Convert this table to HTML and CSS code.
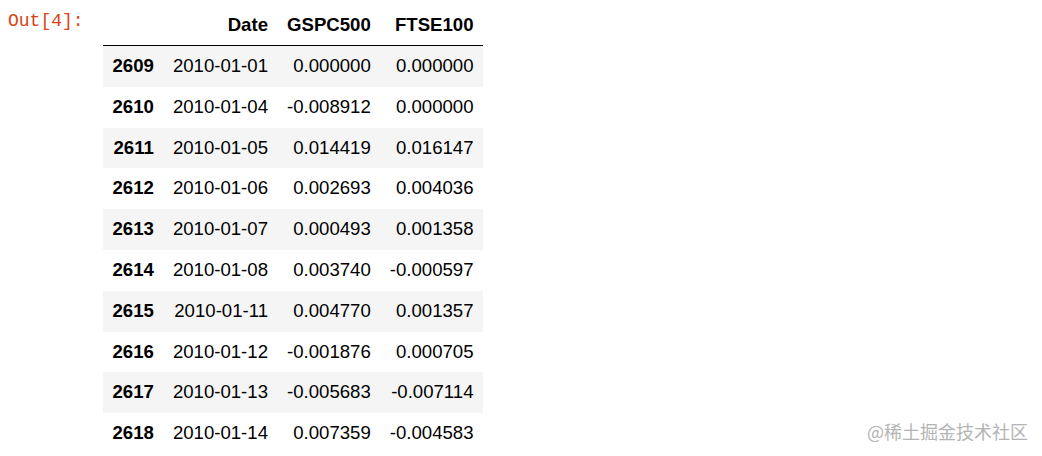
FILE: index.html
```html
<!DOCTYPE html>
<html>
<head>
<meta charset="utf-8">
<link rel="stylesheet" href="styles.css">
</head>
<body>
<div class="cell">
  <div class="prompt">Out[4]:</div>
  <table class="df">
    <thead>
      <tr><th></th><th>Date</th><th>GSPC500</th><th>FTSE100</th></tr>
    </thead>
    <tbody>
      <tr><th>2609</th><td>2010-01-01</td><td>0.000000</td><td>0.000000</td></tr>
      <tr><th>2610</th><td>2010-01-04</td><td>-0.008912</td><td>0.000000</td></tr>
      <tr><th>2611</th><td>2010-01-05</td><td>0.014419</td><td>0.016147</td></tr>
      <tr><th>2612</th><td>2010-01-06</td><td>0.002693</td><td>0.004036</td></tr>
      <tr><th>2613</th><td>2010-01-07</td><td>0.000493</td><td>0.001358</td></tr>
      <tr><th>2614</th><td>2010-01-08</td><td>0.003740</td><td>-0.000597</td></tr>
      <tr><th>2615</th><td>2010-01-11</td><td>0.004770</td><td>0.001357</td></tr>
      <tr><th>2616</th><td>2010-01-12</td><td>-0.001876</td><td>0.000705</td></tr>
      <tr><th>2617</th><td>2010-01-13</td><td>-0.005683</td><td>-0.007114</td></tr>
      <tr><th>2618</th><td>2010-01-14</td><td>0.007359</td><td>-0.004583</td></tr>
    </tbody>
  </table>
</div>
<div class="watermark">@稀土掘金技术社区</div>
</body>
</html>
```
FILE: styles.css
```css
html, body {
  margin: 0;
  padding: 0;
  background: #fff;
}
body {
  width: 1042px;
  height: 456px;
  overflow: hidden;
  position: relative;
}
.cell {
  display: flex;
  align-items: flex-start;
  padding-left: 8px;
}
.prompt {
  width: 95px;
  flex: none;
  font-family: "Liberation Mono", monospace;
  font-size: 18px;
  color: #d84315;
  padding-top: 10px;
  line-height: 22px;
}
.df {
  margin-top: 5px;
  border-collapse: collapse;
  border-spacing: 0;
  font-family: "Liberation Sans", Arial, sans-serif;
  font-size: 18.6px;
  color: #000;
}
.df th, .df td {
  padding: 0 9.5px;
  text-align: right;
  vertical-align: middle;
  white-space: nowrap;
}
.df thead th {
  font-weight: bold;
  line-height: 40px;
  border-bottom: 1px solid #000;
}
.df tbody th {
  font-weight: bold;
}
.df tbody th, .df tbody td {
  line-height: 40.8px;
}
.df tbody tr:nth-child(odd) {
  background: #f5f5f5;
}
.watermark {
  position: absolute;
  right: 14px;
  top: 419px;
  font-family: "Noto Sans CJK SC", sans-serif;
  font-size: 18px;
  line-height: 24px;
  color: #b4b4b4;
}
```
